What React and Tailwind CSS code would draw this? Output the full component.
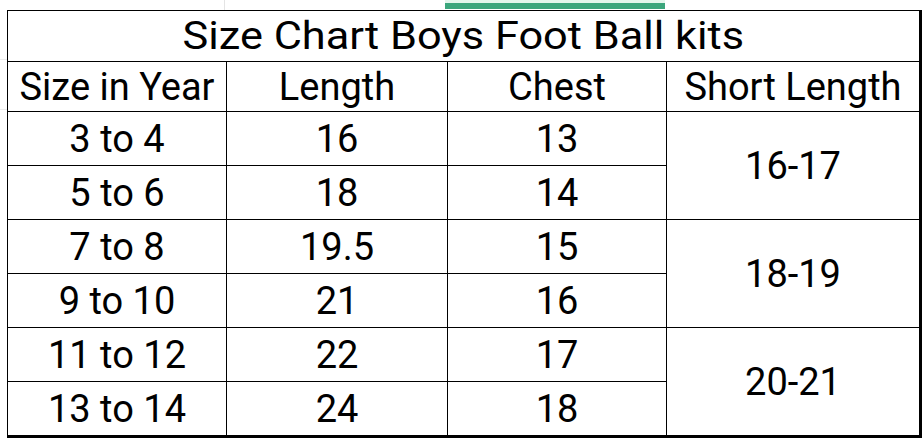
const rows = [
  { size: "3 to 4", length: "16", chest: "13", short: "16-17" },
  { size: "5 to 6", length: "18", chest: "14" },
  { size: "7 to 8", length: "19.5", chest: "15", short: "18-19" },
  { size: "9 to 10", length: "21", chest: "16" },
  { size: "11 to 12", length: "22", chest: "17", short: "20-21" },
  { size: "13 to 14", length: "24", chest: "18" },
];

const cell = "flex items-center justify-center border-r border-b border-black leading-none";

export default function App() {
  return (
    <div className="w-[924px] h-[442px] bg-white overflow-hidden text-black font-['Roboto',sans-serif]">
      {/* sheet chrome above the table */}
      <div className="flex h-[10px]">
        <div className="w-[225px] border-r border-[#e4e4e4]" />
        <div className="w-[220px]" />
        <div className="w-[220px] flex flex-col">
          <div className="h-[3px] bg-[#e3f6ec]" />
          <div className="h-[6px] bg-[#3ba67c]" />
        </div>
      </div>

      <div className="flex">
        <div className="w-[7px] flex flex-col">
          <div className="h-[50px] border-b border-[#ececec]" />
          <div className="h-[50px] border-b border-[#ececec]" />
        </div>

        <div className="grid grid-cols-[219px_221px_219px_255px] grid-rows-[51px_50px_54px_54px_54px_54px_54px_56px] border-t border-l border-black">
          <div className={`${cell} col-span-4 border-r-[3px] text-[38px]`}>
            <span className="inline-block scale-x-[1.14]">Size Chart Boys Foot Ball kits</span>
          </div>

          <div className={`${cell} text-[38px]`}>Size in Year</div>
          <div className={`${cell} text-[38px]`}>Length</div>
          <div className={`${cell} text-[38px]`}>Chest</div>
          <div className={`${cell} border-r-[3px] text-[38px]`}>Short Length</div>

          {rows.map((r, i) => {
            const last = i === rows.length - 1;
            const bottom = last ? "border-b-[3px]" : "";
            return [
              <div key={`s${i}`} className={`${cell} ${bottom} text-[38px]`}>{r.size}</div>,
              <div key={`l${i}`} className={`${cell} ${bottom} text-[38px]`}>{r.length}</div>,
              <div key={`c${i}`} className={`${cell} ${bottom} text-[38px]`}>{r.chest}</div>,
              r.short && (
                <div key={`h${i}`} className={`${cell} row-span-2 border-r-[3px] ${i === 4 ? "border-b-[3px]" : ""} text-[38px]`}>
                  {r.short}
                </div>
              ),
            ];
          })}
        </div>
      </div>
    </div>
  );
}
